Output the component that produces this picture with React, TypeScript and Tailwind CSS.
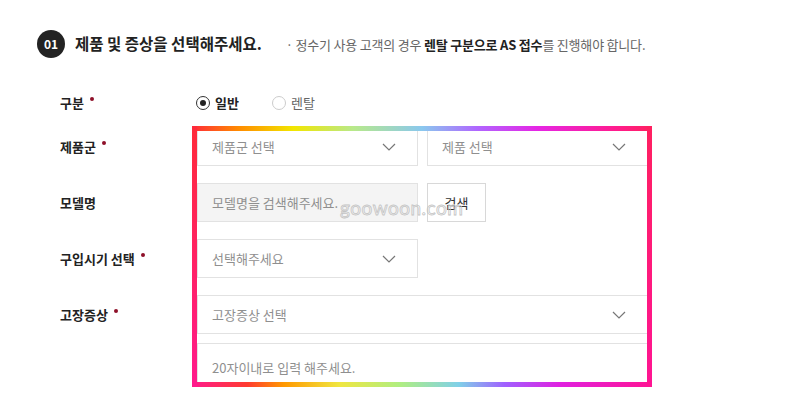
import React from "react";

const FONT = "font-['Noto_Sans_CJK_KR','Noto_Sans',sans-serif]";

const Chevron = () => (
  <svg width="14" height="8" viewBox="0 0 14 8" fill="none">
    <path d="M1 1 L7 7 L13 1" stroke="#777" strokeWidth="1.2" />
  </svg>
);

const Label = ({ text, req = true }: { text: string; req?: boolean }) => (
  <div className="w-[137px] flex items-center text-[13px] font-bold text-[#222]">
    <span>{text}</span>
    {req && (
      <span className="ml-[6px] w-[4px] h-[4px] rounded-full bg-[#8e1029] -translate-y-[4px]" />
    )}
  </div>
);

const Select = ({ text, className }: { text: string; className: string }) => (
  <div
    className={`h-[39px] border border-[#e2e2e2] bg-white flex items-center justify-between pl-[14px] pr-[21px] ${className}`}
  >
    <span className="text-[13px] text-[#8f8f8f]">{text}</span>
    <Chevron />
  </div>
);

const App: React.FC = () => {
  return (
    <div className={`w-[800px] h-[410px] bg-white relative overflow-hidden ${FONT}`}>
      {/* HEADER */}
      <div className="flex items-center pt-[30px] pl-[37px]">
        <div className="w-[28px] h-[28px] rounded-full bg-[#232323] flex items-center justify-center text-white text-[12px] font-bold">
          01
        </div>
        <h2 className="ml-[10px] text-[15.5px] font-bold text-[#222]">
          제품 및 증상을 선택해주세요.
        </h2>
        <p className="ml-[24px] text-[13px] text-[#666] tracking-[-0.2px] mt-[2px]">
          · 정수기 사용 고객의 경우 <b className="text-[#222]">렌탈 구분으로 AS 접수</b>를 진행해야 합니다.
        </p>
      </div>

      {/* FORM */}
      <div className="relative mt-[30px] pl-[60px] flex flex-col">
        {/* 구분 */}
        <div className="h-[30px] flex items-center">
          <Label text="구분" />
          <div className="flex items-center gap-[5px] ml-[-1px]">
            <span className="w-[14px] h-[14px] rounded-full border border-[#333] flex items-center justify-center">
              <span className="w-[6px] h-[6px] rounded-full bg-[#222]" />
            </span>
            <span className="text-[13px] font-bold text-[#222]">일반</span>
          </div>
          <div className="flex items-center gap-[5px] ml-[33px]">
            <span className="w-[14px] h-[14px] rounded-full border border-[#ccc]" />
            <span className="text-[13px] text-[#666]">렌탈</span>
          </div>
        </div>

        {/* 제품군 */}
        <div className="flex items-center mt-[9px]">
          <Label text="제품군" />
          <div className="flex gap-[9px]">
            <Select text="제품군 선택" className="w-[221px]" />
            <Select text="제품 선택" className="w-[221px]" />
          </div>
        </div>

        {/* 모델명 */}
        <div className="flex items-center mt-[17px]">
          <Label text="모델명" req={false} />
          <div className="flex gap-[9px]">
            <div className="w-[221px] h-[39px] border border-[#e2e2e2] bg-[#f4f4f4] flex items-center pl-[14px]">
              <span className="text-[13px] text-[#8f8f8f]">모델명을 검색해주세요.</span>
            </div>
            <div className="w-[59px] h-[39px] border border-[#d8d8d8] bg-white flex items-center justify-center text-[13px] text-[#333]">
              검색
            </div>
          </div>
        </div>

        {/* 구입시기 */}
        <div className="flex items-center mt-[17px]">
          <Label text="구입시기 선택" />
          <Select text="선택해주세요" className="w-[221px]" />
        </div>

        {/* 고장증상 */}
        <div className="flex items-center mt-[17px]">
          <Label text="고장증상" />
          <Select text="고장증상 선택" className="w-[451px]" />
        </div>
        <div className="flex mt-[9px]">
          <div className="w-[137px]" />
          <div className="w-[451px] h-[44px] border border-[#e2e2e2] bg-white pl-[14px] pt-[10px]">
            <span className="text-[13px] text-[#8f8f8f]">20자이내로 입력 해주세요.</span>
          </div>
        </div>

        {/* watermark */}
        <span className="absolute left-[340px] top-[106px] text-[19px] font-['Lato',sans-serif] text-transparent [-webkit-text-stroke:0.8px_#c4c4c4] tracking-[0.5px] pointer-events-none">
          goowoon.com
        </span>
      </div>

      {/* RAINBOW FRAME */}
      <div className="absolute left-[192px] top-[126px] w-[460px] h-[261px] pointer-events-none">
        <div className="absolute left-0 top-0 w-full h-[5px] bg-[linear-gradient(to_right,#ff2a3a_0%,#ff8a00_10%,#f2e600_22%,#b8e98a_35%,#8ac8ee_50%,#b066ff_62%,#e526e5_75%,#ff1c8e_92%,#ff2060_100%)]" />
        <div className="absolute left-0 bottom-0 w-full h-[5px] bg-[linear-gradient(to_right,#ff1a8c_0%,#ff3b30_12%,#ff9900_20%,#f0e640_32%,#b0ee80_45%,#80d0e8_58%,#a060ff_68%,#e020e0_80%,#ff1493_100%)]" />
        <div className="absolute left-0 top-0 w-[5px] h-full bg-[linear-gradient(to_bottom,#ff2a3a,#ff1a8c)]" />
        <div className="absolute right-0 top-0 w-[5px] h-full bg-[linear-gradient(to_bottom,#ff2060,#ff1493)]" />
      </div>
    </div>
  );
};

export default App;
